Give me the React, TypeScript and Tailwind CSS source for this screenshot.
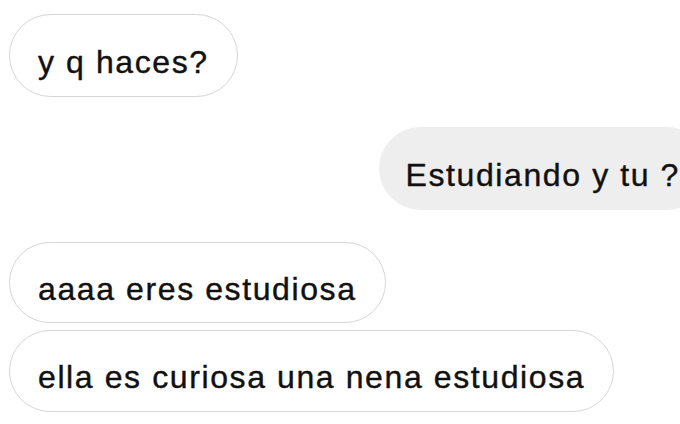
const font = { fontFamily: '"Liberation Sans", Arial, sans-serif' };

type Msg = { text: string; mine?: boolean; cls: string };

const messages: Msg[] = [
    { text: 'y q haces?', cls: 'mt-[14px] h-[83px]' },
    { text: 'Estudiando y tu ?', mine: true, cls: 'mt-[30px] h-[83px]' },
    { text: 'aaaa eres estudiosa', cls: 'mt-[32px] h-[81px]' },
    { text: 'ella es curiosa una nena estudiosa', cls: 'mt-[7px] h-[82px]' },
];

const Bubble = ({ msg }: { msg: Msg }) => {
    if (msg.mine) {
        return (
            <div className={`flex justify-end ${msg.cls}`}>
                <div className="flex items-center h-full rounded-full bg-[#eeeeee] pl-[27px] pr-[28px] pt-[12px] mr-[-28px] shrink-0 whitespace-nowrap">
                    {msg.text}
                </div>
            </div>
        );
    }
    return (
        <div className={`flex ${msg.cls}`}>
            <div className="flex items-center h-full rounded-full border-[1.5px] border-[#d6d6d6] bg-white pl-[28px] pr-[28px] pt-[12px] whitespace-nowrap">
                {msg.text}
            </div>
        </div>
    );
};

const App = () => {
    return (
        <div
            className="w-[680px] h-[424px] overflow-hidden bg-white pl-[9px] text-[32px] leading-[36px] tracking-[1.6px] text-[#111111] [-webkit-text-stroke:0.4px_#111111]"
            style={font}
        >
            {messages.map((m, i) => (
                <Bubble key={i} msg={m} />
            ))}
        </div>
    );
};

export default App;
